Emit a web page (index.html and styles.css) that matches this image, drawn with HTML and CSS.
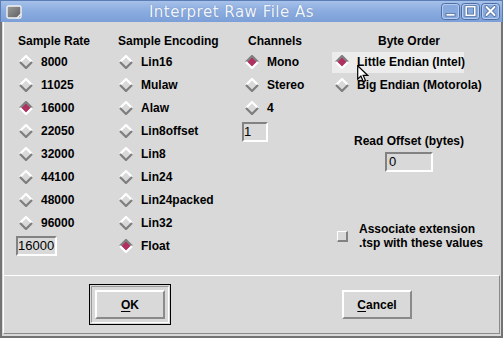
FILE: index.html
```html
<!DOCTYPE html>
<html>
<head>
<meta charset="utf-8">
<title>Interpret Raw File As</title>
<link rel="stylesheet" href="styles.css">
</head>
<body>
<svg class="defs" width="0" height="0" aria-hidden="true">
  <defs>
    <symbol id="r-off" viewBox="0 0 14 14">
      <polyline points="1,7 7,1 13,7" fill="none" stroke="#ffffff" stroke-width="2.2"/>
      <polyline points="1,7 7,13 13,7" fill="none" stroke="#7e7e7e" stroke-width="2.2"/>
    </symbol>
    <symbol id="r-on" viewBox="0 0 14 14">
      <polygon points="7,2 12,7 7,12 2,7" fill="#b03060"/>
      <polyline points="1,7 7,1 13,7" fill="none" stroke="#7e7e7e" stroke-width="2.2"/>
      <polyline points="1,7 7,13 13,7" fill="none" stroke="#ffffff" stroke-width="2.2"/>
    </symbol>
  </defs>
</svg>
<div class="window">
  <div class="titlebar">
    <svg class="appicon" width="16" height="14" viewBox="0 0 16 14">
      <defs>
        <linearGradient id="ig" x1="0" y1="0" x2="1" y2="1">
          <stop offset="0" stop-color="#9c9c9c"/>
          <stop offset="1" stop-color="#5e5e5e"/>
        </linearGradient>
      </defs>
      <rect x="1" y="1" width="14" height="12" rx="1.5" fill="url(#ig)" stroke="#f4f4f4" stroke-width="1.4"/>
      <path d="M11 13 L15 9" stroke="#f4f4f4" stroke-width="1.4"/>
    </svg>
    <div class="title">Interpret Raw File As</div>
    <div class="wbtns">
      <svg class="wbtn" width="19" height="17" viewBox="0 0 19 17">
        <rect x="0.5" y="0.5" width="18" height="16" rx="3" class="wb-bg"/>
        <rect x="1.5" y="1.5" width="16" height="14" rx="2.5" class="wb-in"/>
        <rect x="5" y="10.5" width="9" height="2.6" fill="#fff" stroke="#4d6c9f" stroke-width="0.8"/>
      </svg>
      <svg class="wbtn" width="19" height="17" viewBox="0 0 19 17">
        <rect x="0.5" y="0.5" width="18" height="16" rx="3" class="wb-bg"/>
        <rect x="1.5" y="1.5" width="16" height="14" rx="2.5" class="wb-in"/>
        <rect x="5.2" y="3.7" width="8.6" height="8.6" fill="none" stroke="#4d6c9f" stroke-width="3"/>
        <rect x="5.2" y="3.7" width="8.6" height="8.6" fill="none" stroke="#fff" stroke-width="1.6"/>
      </svg>
      <svg class="wbtn" width="19" height="17" viewBox="0 0 19 17">
        <rect x="0.5" y="0.5" width="18" height="16" rx="3" class="wb-bg"/>
        <rect x="1.5" y="1.5" width="16" height="14" rx="2.5" class="wb-in"/>
        <path d="M5.5 4 L13.5 12 M13.5 4 L5.5 12" stroke="#4d6c9f" stroke-width="3.6" stroke-linecap="round"/>
        <path d="M5.5 4 L13.5 12 M13.5 4 L5.5 12" stroke="#fff" stroke-width="2" stroke-linecap="round"/>
      </svg>
    </div>
  </div>

  <div class="frame">
    <div class="top">
      <div class="col col-rate">
        <div class="hdr">Sample Rate</div>
        <div class="opt"><svg class="radio"><use href="#r-off"/></svg><span>8000</span></div>
        <div class="opt"><svg class="radio"><use href="#r-off"/></svg><span>11025</span></div>
        <div class="opt"><svg class="radio"><use href="#r-on"/></svg><span>16000</span></div>
        <div class="opt"><svg class="radio"><use href="#r-off"/></svg><span>22050</span></div>
        <div class="opt"><svg class="radio"><use href="#r-off"/></svg><span>32000</span></div>
        <div class="opt"><svg class="radio"><use href="#r-off"/></svg><span>44100</span></div>
        <div class="opt"><svg class="radio"><use href="#r-off"/></svg><span>48000</span></div>
        <div class="opt"><svg class="radio"><use href="#r-off"/></svg><span>96000</span></div>
        <div class="field field-rate">16000</div>
      </div>
      <div class="col col-enc">
        <div class="hdr">Sample Encoding</div>
        <div class="opt"><svg class="radio"><use href="#r-off"/></svg><span>Lin16</span></div>
        <div class="opt"><svg class="radio"><use href="#r-off"/></svg><span>Mulaw</span></div>
        <div class="opt"><svg class="radio"><use href="#r-off"/></svg><span>Alaw</span></div>
        <div class="opt"><svg class="radio"><use href="#r-off"/></svg><span>Lin8offset</span></div>
        <div class="opt"><svg class="radio"><use href="#r-off"/></svg><span>Lin8</span></div>
        <div class="opt"><svg class="radio"><use href="#r-off"/></svg><span>Lin24</span></div>
        <div class="opt"><svg class="radio"><use href="#r-off"/></svg><span>Lin24packed</span></div>
        <div class="opt"><svg class="radio"><use href="#r-off"/></svg><span>Lin32</span></div>
        <div class="opt"><svg class="radio"><use href="#r-on"/></svg><span>Float</span></div>
      </div>
      <div class="col col-ch">
        <div class="hdr">Channels</div>
        <div class="opt"><svg class="radio"><use href="#r-on"/></svg><span>Mono</span></div>
        <div class="opt"><svg class="radio"><use href="#r-off"/></svg><span>Stereo</span></div>
        <div class="opt"><svg class="radio"><use href="#r-off"/></svg><span>4</span></div>
        <div class="field field-ch">1</div>
      </div>
      <div class="col col-byte">
        <div class="hdr">Byte Order</div>
        <div class="opt active"><svg class="radio"><use href="#r-on"/></svg><span>Little Endian (Intel)</span></div>
        <div class="opt"><svg class="radio"><use href="#r-off"/></svg><span>Big Endian (Motorola)</span></div>
        <div class="hdr hdr-offset">Read Offset (bytes)</div>
        <div class="field field-off">0</div>
        <div class="check-row">
          <span class="checkbox"></span>
          <span class="check-label">Associate extension<br>.tsp with these values</span>
        </div>
      </div>
    </div>
    <div class="bottom">
      <div class="ring"><div class="ring-in"><div class="btn"><span><u>O</u>K</span></div></div></div>
      <div class="btn"><span><u>C</u>ancel</span></div>
    </div>
  </div>

  <svg class="cursor" width="12" height="18" viewBox="0 0 12 18">
    <path d="M0.7 0.7 L0.7 14.2 L3.9 11.1 L6.3 16.6 L8.5 15.6 L6.2 10.3 L10.6 10.3 Z" fill="#ffffff" stroke="#000000" stroke-width="1.2" stroke-linejoin="miter"/>
  </svg>
</div>
</body>
</html>
```

FILE: styles.css
```css
* {
  box-sizing: border-box;
  margin: 0;
  padding: 0;
}

html, body {
  width: 503px;
  height: 338px;
  overflow: hidden;
}

body {
  font-family: "Liberation Sans", Arial, sans-serif;
  font-size: 12px;
  font-weight: bold;
  color: #000;
  background: #d9d9d9;
}

.defs {
  position: absolute;
  width: 0;
  height: 0;
}

.window {
  position: relative;
  width: 503px;
  height: 338px;
  display: flex;
  flex-direction: column;
}

/* ---------- title bar ---------- */
.titlebar {
  height: 22px;
  flex: none;
  display: flex;
  align-items: center;
  padding: 0 2px 0 5px;
  background: linear-gradient(#a6c1ea 0%, #8cadE0 45%, #7b9fd7 100%);
  border-top: 1px solid #5b7db6;
  border-left: 1px solid #5b7db6;
  border-right: 1px solid #5b7db6;
}

.appicon {
  flex: none;
  display: block;
}

.title {
  flex: 1;
  text-align: center;
  font-family: "DejaVu Sans", sans-serif;
  font-weight: normal;
  font-size: 15px;
  letter-spacing: 0.5px;
  color: #f2f6fc;
  text-shadow: 0 0 1px #5877ab;
}

.wbtns {
  display: flex;
  gap: 1px;
  flex: none;
}

.wbtn {
  display: block;
}

.wb-bg {
  fill: #88a9dd;
  stroke: #4f6fa4;
  stroke-width: 1;
}

.wb-in {
  fill: none;
  stroke: #b7cdef;
  stroke-width: 1;
}

/* ---------- frame ---------- */
.frame {
  flex: 1;
  display: flex;
  flex-direction: column;
  border-left: 2px solid #737373;
  border-right: 2px solid #737373;
  border-bottom: 2px solid #737373;
  padding: 0 1px 2px 1px;
}

.top {
  height: 253px;
  flex: none;
  display: flex;
  border-left: 1px solid #ffffff;
  padding: 12px 0 0 12px;
}

.col {
  display: flex;
  flex-direction: column;
  align-items: flex-start;
}

.col-rate { width: 100px; }
.col-enc { width: 126px; }
.col-ch { width: 90px; }
.col-byte { width: 154px; }

.hdr {
  height: 16px;
  line-height: 14px;
  margin-left: 2px;
  white-space: nowrap;
}

.col-ch .hdr { margin-left: 6px; }

.col-byte .hdr {
  align-self: stretch;
  margin-left: 0;
  text-align: center;
}

.opt {
  height: 23px;
  display: flex;
  align-items: center;
  gap: 8px;
  padding-left: 3px;
  white-space: nowrap;
}

.radio {
  width: 14px;
  height: 14px;
  flex: none;
  display: block;
}

.col-byte .opt {
  width: 132px;
}

.opt.active {
  background: linear-gradient(#ececec, #ececec) 0 2px / 100% 21px no-repeat;
}

.field {
  height: 20px;
  border-style: solid;
  border-width: 2px;
  border-color: #828282 #ffffff #ffffff #828282;
  font-weight: normal;
  font-size: 13px;
  line-height: 16px;
  padding-left: 0;
  background: #d9d9d9;
}

.field-rate {
  width: 41px;
  margin-top: 2px;
}

.field-ch {
  width: 26px;
  margin-top: 3px;
}

.hdr.hdr-offset {
  margin-top: 38px;
  height: 14px;
}

.field-off {
  width: 48px;
  margin-top: 4px;
  align-self: center;
  padding-left: 2px;
}

.check-row {
  margin-top: 50px;
  display: flex;
  align-items: center;
  gap: 11px;
  padding-left: 5px;
}

.checkbox {
  width: 11px;
  height: 11px;
  flex: none;
  border-style: solid;
  border-width: 1px 2px 2px 1px;
  border-color: #ffffff #828282 #828282 #ffffff;
  background: #d9d9d9;
}

.check-label {
  line-height: 14px;
  white-space: nowrap;
}

/* ---------- bottom buttons ---------- */
.bottom {
  flex: 1;
  display: flex;
  align-items: center;
  gap: 171px;
  padding-left: 85px;
  border-top: 1px solid #ffffff;
  border-left: 1px solid #ffffff;
  border-right: 1px solid #8a8a8a;
  border-bottom: 1px solid #8a8a8a;
}

.ring {
  border: 1px solid #000000;
  padding: 1px;
}

.ring-in {
  border-style: solid;
  border-width: 1px;
  border-color: #9a9a9a #ffffff #ffffff #9a9a9a;
  padding: 3px;
}

.btn {
  width: 70px;
  height: 29px;
  display: flex;
  align-items: center;
  justify-content: center;
  border-style: solid;
  border-width: 2px;
  border-color: #ffffff #8a8a8a #8a8a8a #ffffff;
  background: #d9d9d9;
}

.btn u {
  text-decoration: underline;
  text-underline-offset: 2px;
}

/* ---------- pointer overlay ---------- */
.cursor {
  position: absolute;
  left: 357px;
  top: 65px;
  display: block;
}
```
